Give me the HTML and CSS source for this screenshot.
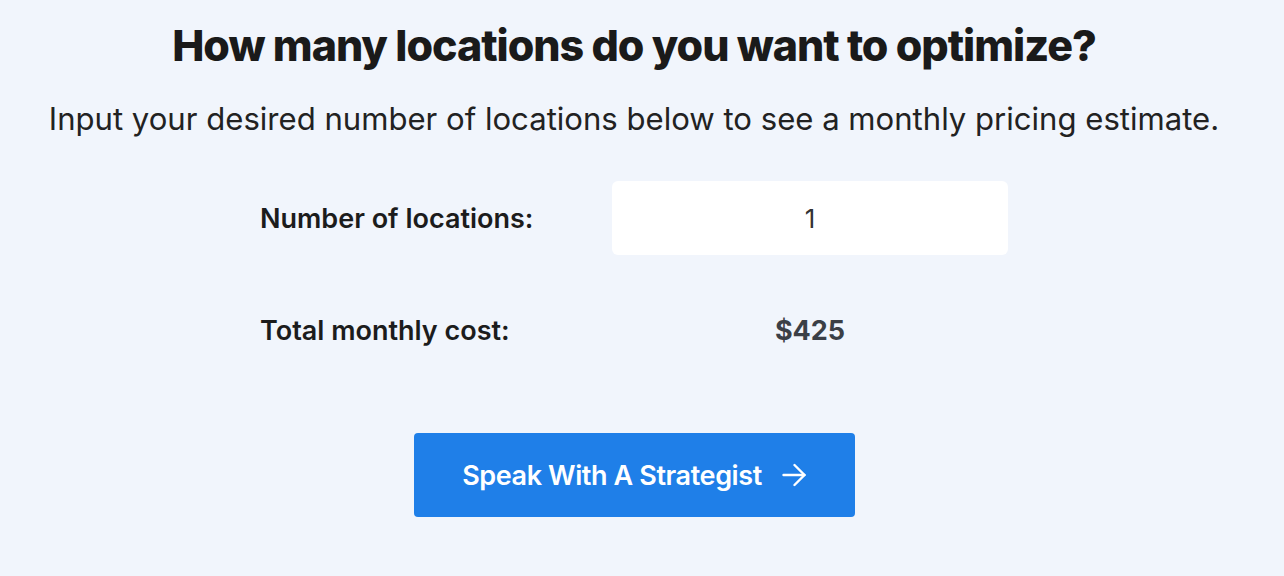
FILE: index.html
```html
<!DOCTYPE html>
<html lang="en">
<head>
<meta charset="utf-8">
<link rel="stylesheet" href="styles.css">
</head>
<body>
<main class="page">
  <h1 class="title">How many locations do you want to optimize?</h1>
  <p class="subtitle">Input your desired number of locations below to see a monthly pricing estimate.</p>
  <div class="calc">
    <label class="label" for="loc">Number of locations:</label>
    <div class="input-box"><span class="input-value">1</span></div>
    <div class="label">Total monthly cost:</div>
    <div class="cost">$425</div>
  </div>
  <div class="cta-row">
    <a class="cta" href="#">Speak With A Strategist
      <svg class="arrow" width="24" height="24" viewBox="0 0 24 24" fill="none" stroke="currentColor" stroke-width="2.4" stroke-linecap="round" stroke-linejoin="round"><path d="M1.5 12h21"/><path d="M12.5 2l10 10-10 10"/></svg>
    </a>
  </div>
</main>
</body>
</html>
```
FILE: styles.css
```css
html, body {
  margin: 0;
  padding: 0;
  background: #f1f5fc;
}
body {
  font-family: Inter, "Noto Sans", sans-serif;
  color: #1c1c1e;
}
.page {
  width: 1268px;
  display: flex;
  flex-direction: column;
  align-items: center;
  padding-top: 19px;
}
.title {
  margin: 0;
  font-size: 43px;
  font-weight: 800;
  letter-spacing: -1.05px;
  line-height: 52px;
  color: #1a1a1a;
}
.subtitle {
  margin: 28px 0 0;
  font-size: 31.1px;
  font-weight: 400;
  line-height: 40px;
  color: #222;
}
.calc {
  margin-top: 42px;
  display: grid;
  grid-template-columns: 352px 396px;
  grid-template-rows: 74px 74px;
  row-gap: 38px;
  align-items: center;
}
.label {
  font-size: 27px;
  font-weight: 600;
  color: #1c1c1c;
}
.input-box {
  height: 74px;
  background: #fff;
  border-radius: 6px;
  display: flex;
  align-items: center;
  justify-content: center;
}
.input-value {
  font-size: 26px;
  color: #333;
}
.cost {
  text-align: center;
  font-size: 27px;
  font-weight: 700;
  color: #3b3f46;
}
.cta-row {
  margin-top: 66px;
}
.cta {
  display: flex;
  align-items: center;
  justify-content: center;
  gap: 20px;
  width: 441px;
  height: 84px;
  background: #1f7fe8;
  border-radius: 4px;
  color: #fff;
  text-decoration: none;
  font-size: 27px;
  font-weight: 600;
  letter-spacing: -0.4px;
}
.arrow {
  display: block;
}
```
